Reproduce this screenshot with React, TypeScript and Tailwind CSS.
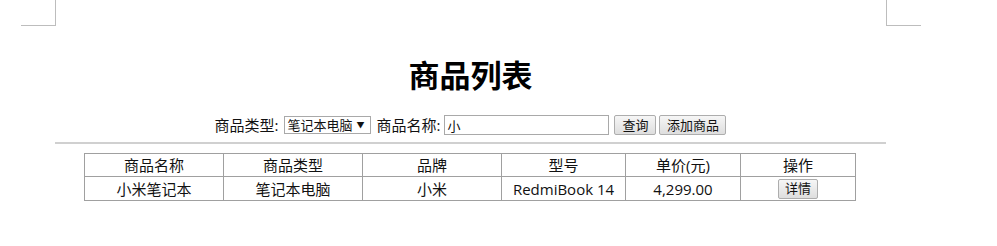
import React from 'react';

const font = { fontFamily: '"Open Sans", "Noto Sans CJK SC", sans-serif' };

const products = [
  { name: '小米笔记本', type: '笔记本电脑', brand: '小米', model: 'RedmiBook 14', price: '4,299.00' },
];

function Btn({ children, className = '' }: { children: React.ReactNode; className?: string }) {
  return (
    <button
      className={`h-[20px] px-[6px] text-[13px] leading-none text-[#111] border border-[#adadad] rounded-[2px] bg-gradient-to-b from-[#f6f6f6] to-[#dedede] ${className}`}
    >
      {children}
    </button>
  );
}

export default function App() {
  return (
    <div className="w-[997px] h-[246px] bg-white text-[#111] overflow-hidden" style={font}>
      <div className="flex h-[26px]">
        <div className="ml-[21px] w-[35px] border-r border-b border-[#bdbdbd]" />
        <div className="ml-[830px] w-[35px] border-l border-b border-[#bdbdbd]" />
      </div>

      <div className="ml-[55px] w-[831px]">
        <h1 className="mt-[25px] text-center text-[31px] font-bold leading-[48px] text-black">商品列表</h1>

        <div className="mt-[15px] h-[22px] flex items-center justify-center text-[15px]">
          <span>商品类型:</span>
          <div className="ml-[5px] w-[87px] h-[18px] flex items-center justify-between border border-[#a9a9a9] pl-[3px] pr-[5px] text-[13px] leading-none">
            <span>笔记本电脑</span>
            <span className="text-[8px]">▼</span>
          </div>
          <span className="ml-[6px]">商品名称:</span>
          <input
            defaultValue="小"
            className="ml-[4px] w-[165px] h-[20px] border border-[#a9a9a9] px-[2px] text-[13px] outline-none"
            style={font}
          />
          <Btn className="ml-[5px] w-[42px]">查询</Btn>
          <Btn className="ml-[3px] w-[67px]">添加商品</Btn>
        </div>

        <div className="mt-[6px] border-t-2 border-[#d0d0d0]" />

        <table className="mt-[9px] ml-[29px] w-[772px] border-collapse text-[15px] text-center">
          <thead>
            <tr className="h-[23px]">
              {['商品名称', '商品类型', '品牌', '型号', '单价(元)', '操作'].map((h, i) => (
                <th
                  key={h}
                  className={`border border-[#a0a0a0] font-normal leading-[21px] p-0 ${
                    i < 3 ? 'w-[139px]' : i === 3 ? 'w-[124px]' : 'w-[115px]'
                  }`}
                >
                  {h}
                </th>
              ))}
            </tr>
          </thead>
          <tbody>
            {products.map((p) => (
              <tr key={p.name} className="h-[24px]">
                <td className="border border-[#a0a0a0] p-0 leading-[22px]">{p.name}</td>
                <td className="border border-[#a0a0a0] p-0 leading-[22px]">{p.type}</td>
                <td className="border border-[#a0a0a0] p-0 leading-[22px]">{p.brand}</td>
                <td className="border border-[#a0a0a0] p-0 leading-[22px]">{p.model}</td>
                <td className="border border-[#a0a0a0] p-0 leading-[22px]">{p.price}</td>
                <td className="border border-[#a0a0a0] p-0 leading-none">
                  <Btn className="w-[40px] align-middle">详情</Btn>
                </td>
              </tr>
            ))}
          </tbody>
        </table>
      </div>
    </div>
  );
}
